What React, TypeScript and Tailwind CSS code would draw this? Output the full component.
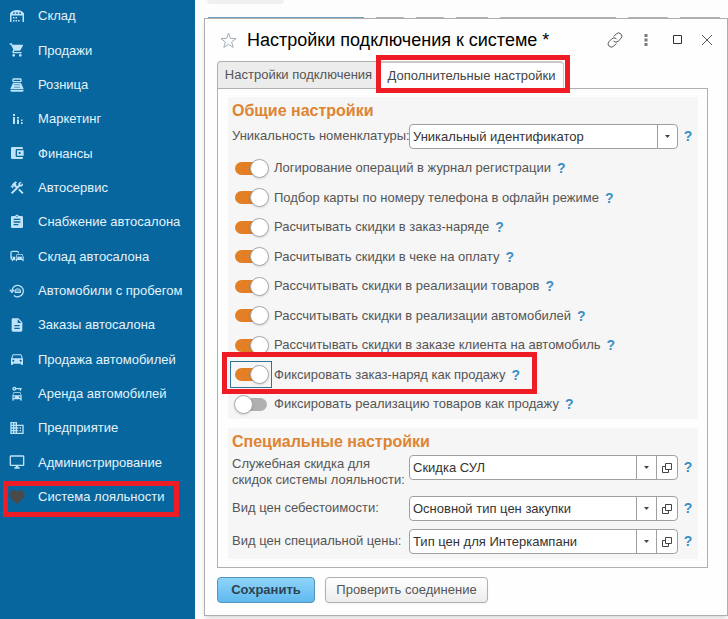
import React, { useState } from 'react';
import {
  MdAccountBalanceWallet,
  MdAssignment,
  MdBusiness,
  MdCarRental,
  MdCommute,
  MdConstruction,
  MdDescription,
  MdDirectionsCar,
  MdFavorite,
  MdOutlineDesktopWindows,
  MdPointOfSale,
  MdShoppingCart,
} from 'react-icons/md';

const WarehouseIcon = () => (
  <svg width="16" height="16" viewBox="0 0 16 16" fill="currentColor">
    <path fillRule="evenodd" d="M1 14V5.500C2 3.500 5 2 8 2s6 1.500 7 3.500V14h-1.500V7.500h-11V14zM4 4.500v1.200h2V4.500zm3 0v1.200h2V4.500zm3 0v1.200h2V4.500z" />
    <path d="M4 9h1.500v1.500H4zM6.500 9H8v1.500H6.500zM4 12h1.500v1.500H4zM6.500 12H8v1.500H6.500zM9 12h1.500v1.500H9z" />
  </svg>
);

const BarsIcon = () => (
  <svg width="16" height="16" viewBox="0 0 16 16" fill="currentColor">
    <path d="M4 3h2v2H4zM4 6h2v7H4zM8 6h2v1.500H8zM8 8.500h2V13H8zM12 8.500h1.500V10H12zM12 11h1.500v2H12z" />
  </svg>
);

const UsedCarIcon = () => (
  <svg width="16" height="16" viewBox="0 0 16 16" fill="none" stroke="currentColor" strokeWidth="1.300">
    <path d="M3 8a5.700 5.700 0 1 1 2 4.400" />
    <path d="M.8 6.800 3 9.200l2.200-2.400" />
    <path d="M6 9.500V8l1-2h3.500l1 2v1.500zM6 8h5.500" strokeWidth="1" />
  </svg>
);

const NAV_ITEMS = [
  { label: 'Склад', icon: <WarehouseIcon /> },
  { label: 'Продажи', icon: <MdShoppingCart size={16} /> },
  { label: 'Розница', icon: <MdPointOfSale size={16} /> },
  { label: 'Маркетинг', icon: <BarsIcon /> },
  { label: 'Финансы', icon: <MdAccountBalanceWallet size={16} /> },
  { label: 'Автосервис', icon: <MdConstruction size={16} /> },
  { label: 'Снабжение автосалона', icon: <MdAssignment size={16} /> },
  { label: 'Склад автосалона', icon: <MdCommute size={16} /> },
  { label: 'Автомобили с пробегом', icon: <UsedCarIcon /> },
  { label: 'Заказы автосалона', icon: <MdDescription size={16} /> },
  { label: 'Продажа автомобилей', icon: <MdDirectionsCar size={16} /> },
  { label: 'Аренда автомобилей', icon: <MdCarRental size={16} /> },
  { label: 'Предприятие', icon: <MdBusiness size={16} /> },
  { label: 'Администрирование', icon: <MdOutlineDesktopWindows size={16} /> },
  { label: 'Система лояльности', icon: <MdFavorite size={18} className="text-[#4a4a4a]" />, marked: true },
];

const TOGGLES = [
  { label: 'Логирование операций в журнал регистрации', on: true },
  { label: 'Подбор карты по номеру телефона в офлайн режиме', on: true },
  { label: 'Расчитывать скидки в заказ-наряде', on: true },
  { label: 'Расчитывать скидки в чеке на оплату', on: true },
  { label: 'Рассчитывать скидки в реализации товаров', on: true },
  { label: 'Рассчитывать скидки в реализации автомобилей', on: true },
  { label: 'Рассчитывать скидки в заказе клиента на автомобиль', on: true },
  { label: 'Фиксировать заказ-наряд как продажу', on: true, marked: true },
  { label: 'Фиксировать реализацию товаров как продажу', on: false },
];

const Help = () => (
  <button type="button" aria-label="Справка" className="text-sm leading-4 font-bold text-[#3a8fc4]">?</button>
);

interface ToggleProps {
  label: string;
  on: boolean;
  marked?: boolean;
}

const Toggle: React.FC<ToggleProps> = ({ label, on, marked }) => {
  const [checked, setChecked] = useState(on);
  return (
    <li className="relative flex h-7 items-center">
      <label className="flex items-center">
        <span className={`flex h-[27px] w-[42px] items-center border pl-1 ${marked ? 'border-[#2f7396]' : 'border-transparent'}`}>
          <input
            type="checkbox"
            checked={checked}
            onChange={(e) => setChecked(e.target.checked)}
            className="relative h-[13px] w-8 appearance-none rounded-full bg-[#b0b0b0] outline-none before:absolute before:-top-[3px] before:-left-px before:h-[19px] before:w-[19px] before:rounded-full before:border before:border-[#a3a9ac] before:bg-white before:shadow-sm checked:bg-[#e37f25] checked:before:left-[15px]"
          />
        </span>
        <span className="pl-0.5">{label}</span>
      </label>
      <span className="ml-1.5 flex"><Help /></span>
      {marked && <span className="pointer-events-none absolute -top-[9px] -left-2 z-10 h-[42px] w-[315px] border-[5px] border-[#ee1c25]" />}
    </li>
  );
};

interface FieldProps {
  id: string;
  label: React.ReactNode;
  value: string;
  openable?: boolean;
  tall?: boolean;
}

const Field: React.FC<FieldProps> = ({ id, label, value, openable, tall }) => (
  <div className="flex items-start">
    <label htmlFor={id} className={`w-[177px] shrink-0 whitespace-nowrap ${tall ? 'pt-px leading-4' : 'leading-6'}`}>{label}</label>
    <div className="flex h-[25px] min-w-0 flex-1 rounded-sm border border-[#a0a0a0] bg-white">
      <div className="relative min-w-0 flex-1">
        <select id={id} defaultValue={value} className="h-full w-full appearance-none pr-6 pl-[3px] text-[#333] outline-none">
          <option>{value}</option>
        </select>
        <span className="pointer-events-none absolute inset-y-0 right-0 flex w-5 items-center justify-center border-l border-[#a0a0a0]">
          <svg width="5" height="3" viewBox="0 0 5 3" fill="#444"><path d="M0 0h5L2.500 3z" /></svg>
        </span>
      </div>
      {openable && (
        <button type="button" aria-label="Открыть" className="flex w-[21px] items-center justify-center border-l border-[#a0a0a0]">
          <svg width="10" height="10" viewBox="0 0 10 10" fill="none" stroke="#444"><path d="M3.500.5h6v6h-6zM3.500 3.500h-3v6h6v-3" /></svg>
        </button>
      )}
    </div>
    <span className="flex h-6 w-5 shrink-0 items-center justify-center"><Help /></span>
  </div>
);

const Sidebar = () => (
  <nav className="w-[195px] shrink-0 bg-[#07669e] text-[#e4f3fb]">
    <ul className="flex h-[513px] flex-col justify-between">
      {NAV_ITEMS.map((item) => (
        <li key={item.label} className="relative">
          <a href="#" className="flex h-8 items-center whitespace-nowrap">
            <span className="flex w-[33px] shrink-0 justify-center text-[#bfe4fa]">{item.icon}</span>
            <span className="pl-[5px]">{item.label}</span>
          </a>
          {item.marked && <span className="pointer-events-none absolute top-0 left-[3px] h-9 w-[176px] border-[5px] border-[#ee1c25]" />}
        </li>
      ))}
    </ul>
  </nav>
);

export default function App() {
  return (
    <div className="flex min-h-screen bg-[#fdfdfd] font-['Liberation_Sans',Arial,sans-serif] text-[13px] text-[#555]">
      <Sidebar />
      <main className="min-w-0 flex-1 pl-[9px]">
        <div className="h-[17px] pl-[3px]">
          <div className="h-1 w-[77px] rounded-b bg-[#f0f0f0]" />
        </div>
        <div className="flex h-px gap-3 pl-1">
          <span className="w-[156px] bg-[#6fa3bd]" />
          <span className="w-7 bg-[#b0b0b0]" />
          <span className="w-7 bg-[#b0b0b0]" />
          <span className="w-8 bg-[#b0b0b0]" />
          <span className="flex-1 bg-[#b0b0b0]" />
          <span className="w-10 bg-[#b0b0b0]" />
          <span className="mr-2 w-10 bg-[#b0b0b0]" />
        </div>

        <section role="dialog" aria-labelledby="dialog-title" className="border border-[#aeaeae] bg-[#fefefe] pr-[19px] pb-3 pl-3 shadow-md">
          <header className="flex h-[42px] items-center">
            <button type="button" aria-label="Избранное" className="w-[30px] shrink-0 pl-[3px]">
              <svg width="17" height="17" viewBox="0 0 17 17" fill="none" stroke="#a3adb5"><path d="m8.500 1.200 1.900 5.200 5.600.2-4.400 3.400 1.600 5.400-4.700-3.100-4.700 3.100L5.400 10 1 6.600l5.600-.2z" /></svg>
            </button>
            <h1 id="dialog-title" className="flex-1 whitespace-nowrap text-lg text-black">Настройки подключения к системе *</h1>
            <div className="flex items-center text-[#555]">
              <button type="button" aria-label="Получить ссылку" className="mr-[21px]">
                <svg width="16" height="16" viewBox="0 0 16 16" fill="none" stroke="currentColor" strokeLinecap="round">
                  <path d="m7 4.200 2.300-2.300a3.200 3.200 0 0 1 4.600 4.600l-2.700 2.700a3.200 3.200 0 0 1-4.400.2" />
                  <path d="m9 11.800-2.300 2.300a3.200 3.200 0 0 1-4.600-4.600l2.700-2.700a3.200 3.200 0 0 1 4.400-.2" />
                </svg>
              </button>
              <button type="button" aria-label="Ещё" className="mr-6">
                <svg width="4" height="12" viewBox="0 0 4 12" fill="#777"><path d="M.5 0h3v3h-3zM.5 4.500h3v3h-3zM.5 9h3v3h-3z" /></svg>
              </button>
              <button type="button" aria-label="Развернуть" className="mr-5">
                <svg width="10" height="10" viewBox="0 0 10 10" fill="none" stroke="#333"><path d="M1.500.5h8v8h-8z" /></svg>
              </button>
              <button type="button" aria-label="Закрыть" className="-mr-1">
                <svg width="10" height="10" viewBox="0 0 10 10" fill="none" stroke="currentColor"><path d="m0 0 10 10M10 0 0 10" /></svg>
              </button>
            </div>
          </header>

          <div role="tablist" className="flex h-[27px]">
            <button type="button" role="tab" aria-selected="false" className="w-[163px] whitespace-nowrap rounded-tl-sm border border-b-0 border-[#b0b0b0] bg-[#ececec]">Настройки подключения</button>
            <div className="relative z-10 -mb-px w-[184px]">
              <button type="button" role="tab" aria-selected="true" className="h-full w-full whitespace-nowrap rounded-tr-sm border-t-2 border-r border-[#c8c8c8] bg-[#fefefe] text-[#444]">Дополнительные настройки</button>
              <span className="pointer-events-none absolute -top-[6px] -left-1 h-[38px] w-[194px] border-[5px] border-[#ee1c25]" />
            </div>
          </div>

          <div role="tabpanel" className="flex flex-col gap-[9px] border border-[#b0b0b0] py-2 pr-[9px] pl-[10px]">
            <section className="bg-[#f6f6f6] pt-1 pb-px pl-1">
              <h2 className="text-base leading-5 font-bold text-[#de8432]">Общие настройки</h2>
              <div className="mt-[3px]">
                <Field id="uniqueness" label="Уникальность номенклатуры:" value="Уникальный идентификатор" />
              </div>
              <ul className="mt-[5px] -ml-0.5 flex h-[264px] flex-col justify-between whitespace-nowrap">
                {TOGGLES.map((toggle) => (
                  <Toggle key={toggle.label} {...toggle} />
                ))}
              </ul>
            </section>

            <section className="bg-[#f6f6f6] pt-1 pb-[5px] pl-1">
              <h2 className="text-base leading-5 font-bold text-[#de8432]">Специальные настройки</h2>
              <div className="mt-[3px] flex flex-col gap-2">
                <Field id="discount" label={<>Служебная скидка для<br />скидок системы лояльности:</>} value="Скидка СУЛ" openable tall />
                <Field id="cost" label="Вид цен себестоимости:" value="Основной тип цен закупки" openable />
                <Field id="special" label="Вид цен специальной цены:" value="Тип цен для Интеркампани" openable />
              </div>
            </section>
          </div>

          <footer className="mt-[9px] flex gap-[10px]">
            <button type="button" className="h-[26px] w-[98px] rounded-sm border border-[#5594ba] bg-linear-to-b from-[#8fd4fb] to-[#5fb9ee] font-bold text-[#2d4350]">Сохранить</button>
            <button type="button" className="h-[26px] w-[163px] whitespace-nowrap rounded-sm border border-[#b0b0b0] bg-linear-to-b from-white to-[#ececec] shadow-xs">Проверить соединение</button>
          </footer>
        </section>
      </main>
    </div>
  );
}
